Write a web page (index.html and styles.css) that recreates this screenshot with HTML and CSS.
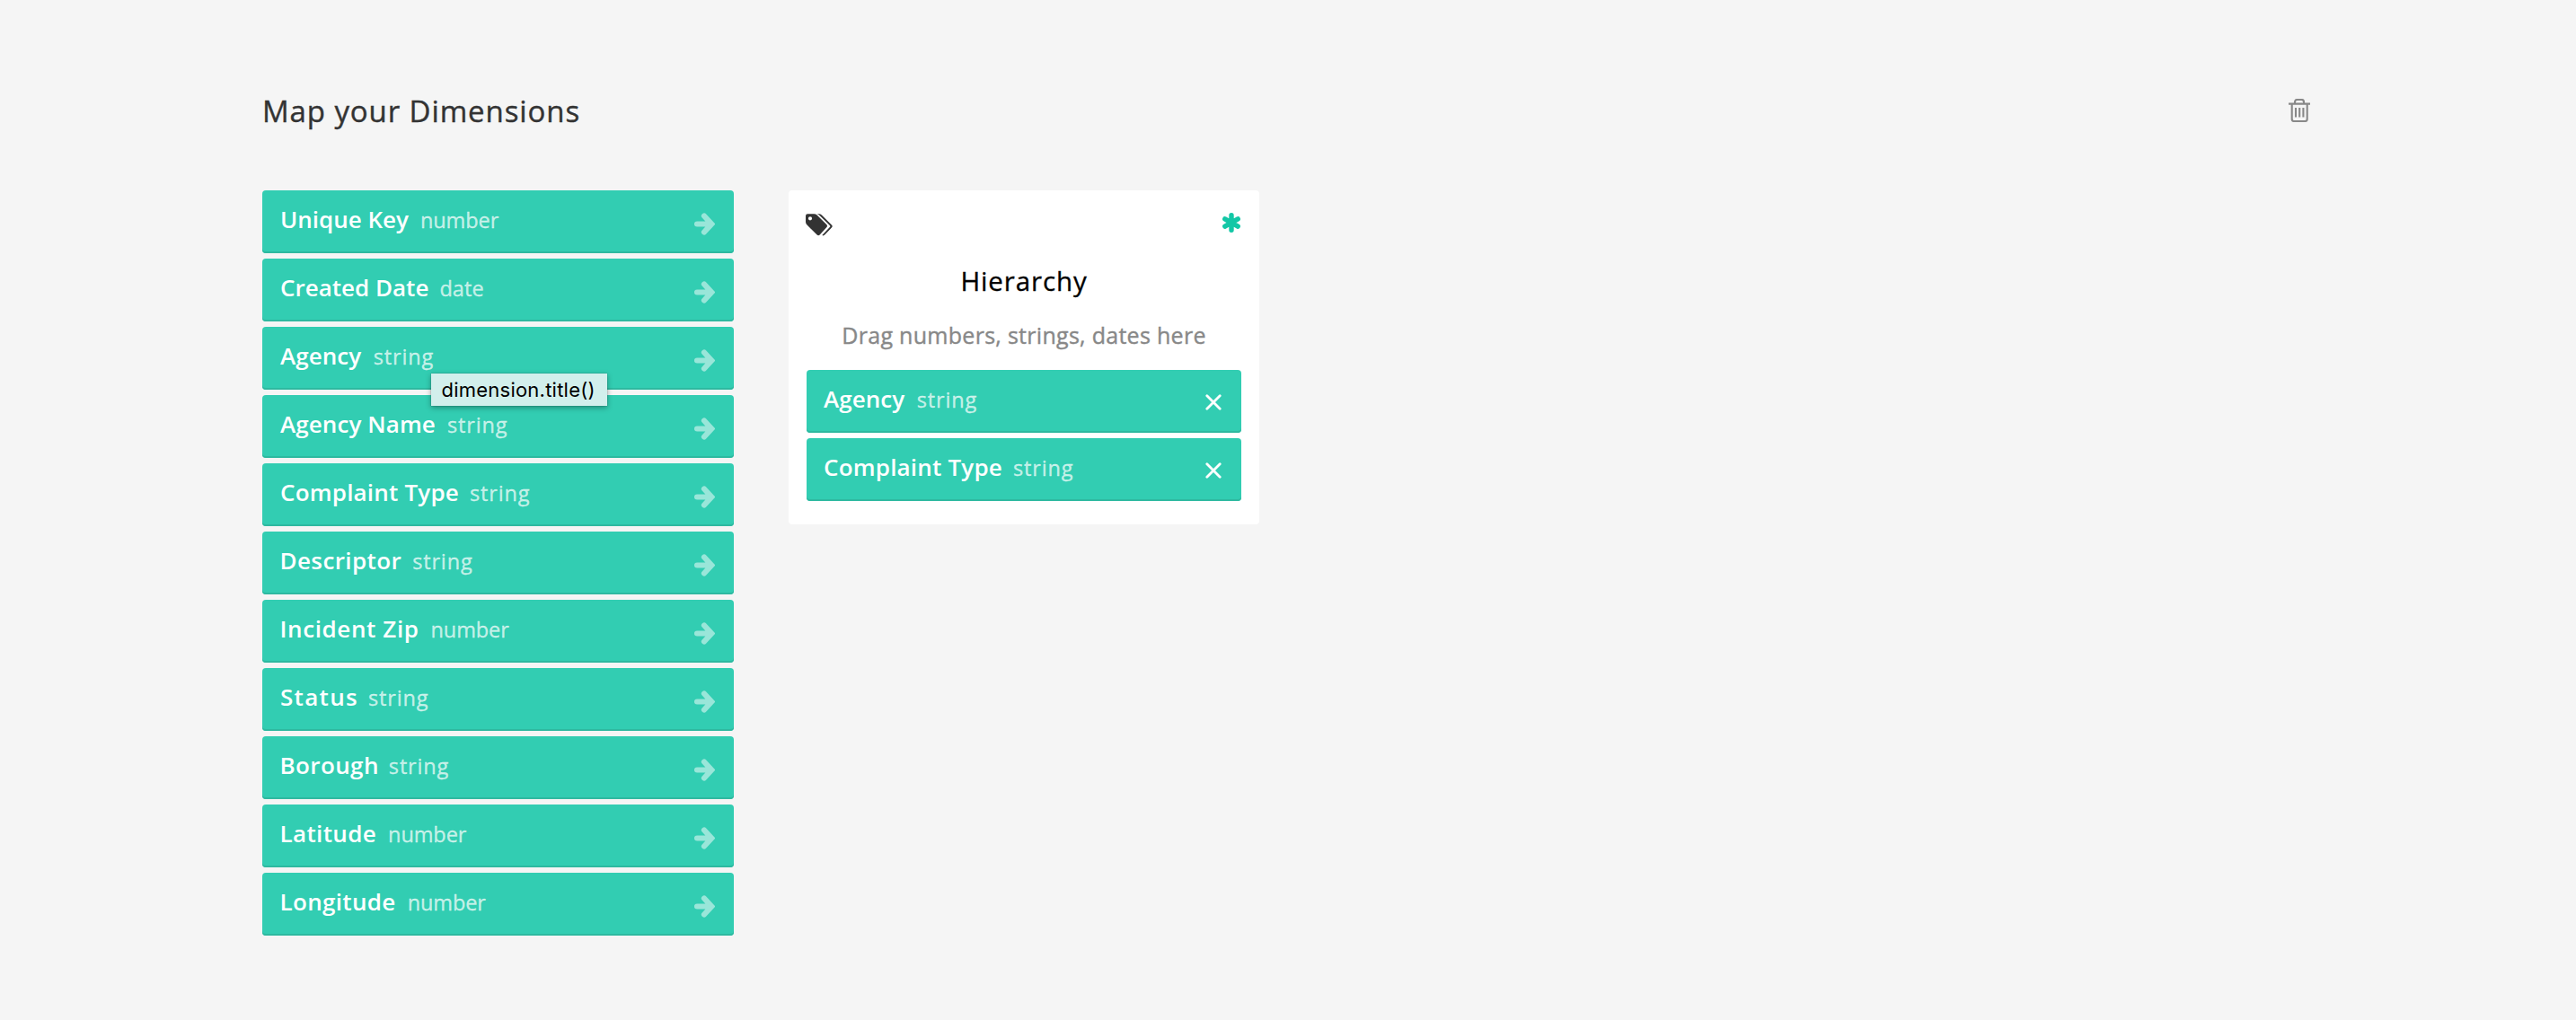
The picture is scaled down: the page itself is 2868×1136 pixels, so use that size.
FILE: index.html
```
<!DOCTYPE html>
<html lang="en">
<head>
<meta charset="utf-8">
<title>Map your Dimensions</title>
<link rel="stylesheet" href="styles.css">
</head>
<body>
<svg class="defs" aria-hidden="true">
  <symbol id="arrow" viewBox="0 0 23 25"><path d="M3 12.5H18M11 3.5L19.2 12.5L11 21.5" fill="none" stroke="currentColor" stroke-width="6.2" stroke-linecap="round" stroke-linejoin="miter"/></symbol>
  <symbol id="cross" viewBox="0 0 18 18"><path d="M1.8 1.8L16.2 16.2M16.2 1.8L1.8 16.2" fill="none" stroke="currentColor" stroke-width="2.8" stroke-linecap="round"/></symbol>
</svg>
<main class="page">
  <header class="header">
    <h1 class="title">Map your Dimensions</h1>
    <svg class="trash" viewBox="0 0 24 26"><path d="M0 5.6H24M7 5V3.6Q7 1 9.6 1H14.4Q17 1 17 3.6V5M3.7 6V22.4Q3.7 25 6.3 25H18.1Q20.7 25 20.7 22.4V6M8 10V20.6M12.2 10V20.6M16.4 10V20.6" fill="none" stroke="currentColor" stroke-width="2.1"/></svg>
  </header>
  <div class="columns">
    <ul class="list source">
      <li class="item"><span class="name unique-key">Unique Key</span><span class="type number">number</span><svg class="arrow"><use href="#arrow"/></svg></li>
      <li class="item"><span class="name created-date">Created Date</span><span class="type date">date</span><svg class="arrow"><use href="#arrow"/></svg></li>
      <li class="item"><span class="name agency">Agency</span><span class="type string">string</span><svg class="arrow"><use href="#arrow"/></svg><span class="tooltip">dimension.title()</span></li>
      <li class="item"><span class="name agency-name">Agency Name</span><span class="type string">string</span><svg class="arrow"><use href="#arrow"/></svg></li>
      <li class="item"><span class="name complaint-type">Complaint Type</span><span class="type string">string</span><svg class="arrow"><use href="#arrow"/></svg></li>
      <li class="item"><span class="name descriptor">Descriptor</span><span class="type string">string</span><svg class="arrow"><use href="#arrow"/></svg></li>
      <li class="item"><span class="name incident-zip">Incident Zip</span><span class="type number">number</span><svg class="arrow"><use href="#arrow"/></svg></li>
      <li class="item"><span class="name status">Status</span><span class="type string">string</span><svg class="arrow"><use href="#arrow"/></svg></li>
      <li class="item"><span class="name borough">Borough</span><span class="type string">string</span><svg class="arrow"><use href="#arrow"/></svg></li>
      <li class="item"><span class="name latitude">Latitude</span><span class="type number">number</span><svg class="arrow"><use href="#arrow"/></svg></li>
      <li class="item"><span class="name longitude">Longitude</span><span class="type number">number</span><svg class="arrow"><use href="#arrow"/></svg></li>
    </ul>
    <section class="card">
      <div class="card-head">
        <svg class="tags" viewBox="0 0 30 25"><path fill="currentColor" fill-rule="evenodd" d="M0 2.4Q0 .3 2.1 .3H9.3Q11.2 .3 12.6 1.6L23.2 12.1Q24.8 13.7 23.2 15.3L15.7 23.6Q14.2 25 12.6 23.6L2 13Q0 11.2 0 9.2ZM5 3.2A2.1 2.1 0 1 0 5 7.4A2.1 2.1 0 1 0 5 3.2Z"/><path fill="currentColor" d="M12.5 .3H14.6Q16.5 .3 17.9 1.6L28.9 12.4Q30.5 14 28.9 15.6L21.2 23.6Q19.8 25 18.3 24L27 14.8Q27.8 14 27 13.2L15.8 2.2Q14.5 .9 12.5 .3Z"/></svg>
        <svg class="asterisk" viewBox="0 0 20 22"><path d="M10 2.7V19.3M2.8 6.8L17.2 15.2M17.2 6.8L2.8 15.2" fill="none" stroke="currentColor" stroke-width="5.4" stroke-linecap="round"/></svg>
      </div>
      <h2 class="card-title">Hierarchy</h2>
      <p class="hint">Drag numbers, strings, dates here</p>
      <ul class="list">
        <li class="item"><span class="name agency">Agency</span><span class="type string">string</span><svg class="cross"><use href="#cross"/></svg></li>
        <li class="item"><span class="name complaint-type">Complaint Type</span><span class="type string">string</span><svg class="cross"><use href="#cross"/></svg></li>
      </ul>
    </section>
  </div>
</main>
</body>
</html>
```
FILE: styles.css
```
* { box-sizing: border-box; }
body { margin: 0; background: #f5f5f5; font-family: "Open Sans", "Noto Sans", sans-serif; color: #333; }
.defs { position: absolute; width: 0; height: 0; }
.page { padding: 100px 296px 94px 292px; }
.header { display: flex; justify-content: space-between; align-items: flex-start; height: 50px; margin-bottom: 62px; }
.title { margin: 0; font-size: 33px; font-weight: 400; line-height: 48px; letter-spacing: .9px; -webkit-text-stroke: .4px; }
.trash { width: 24px; height: 26px; margin-top: 10px; color: #888; }
.columns { display: flex; align-items: flex-start; gap: 61px; }

.list { display: flex; flex-direction: column; gap: 6px; margin: 0; padding: 0; list-style: none; }
.source { width: 525px; }
.item { position: relative; display: flex; height: 70px; padding: 0 21px 0 20px; border-radius: 4px; background: #32cdb2; box-shadow: inset 0 -2px 0 #2eb9a0; color: #fff; line-height: 64px; }
.name { margin-right: 12px; font-size: 26px; font-weight: 600; }
.type { font-size: 23.5px; line-height: 66px; color: rgba(255, 255, 255, .7); -webkit-text-stroke: .3px; }
.arrow { width: 23px; height: 25px; margin: 24.5px 0 0 auto; color: rgba(255, 255, 255, .5); }
.cross { width: 18px; height: 18px; margin: 26.6px 1px 0 auto; }

.number { margin-left: 1px; letter-spacing: -.1px; }
.string { letter-spacing: .85px; }
.date { letter-spacing: .1px; }
.descriptor, .incident-zip, .borough, .latitude, .longitude { margin-left: -.5px; }
.agency { margin-right: 13.5px; letter-spacing: .05px; }
.agency-name { margin-right: 13px; letter-spacing: .09px; }
.complaint-type { letter-spacing: .2px; }
.descriptor { letter-spacing: .4px; }
.incident-zip { letter-spacing: .61px; }
.status { margin-right: 11px; letter-spacing: 1.3px; }
.borough { margin-right: 11px; letter-spacing: .4px; }
.latitude { letter-spacing: .36px; }
.longitude { letter-spacing: .33px; }

.tooltip { position: absolute; z-index: 1; left: 188px; top: 52px; width: 196px; height: 36px; padding-left: 11.5px; background: #d2efec; box-shadow: 0 2px 6px rgba(0, 0, 0, .35), 0 0 1px rgba(0, 0, 0, .4); color: #000; font: 400 22px/36px Inter, sans-serif; letter-spacing: .23px; }

.card { width: 524px; height: 372px; padding: 0 20px; border-radius: 4px; background: #fff; }
.card .item { padding-left: 19px; }
.card-head { display: flex; justify-content: space-between; height: 81px; padding-top: 25px; margin: 0 1px 0 -1px; }
.tags { width: 30px; height: 25px; margin-top: 1px; }
.asterisk { width: 20px; height: 22px; color: #13c7a6; }
.card-title { margin: 0 0 20px; font-size: 29.5px; font-weight: 400; line-height: 40px; letter-spacing: .88px; color: #000; text-align: center; -webkit-text-stroke: .3px; }
.hint { margin: 0 0 19px; font-size: 25px; line-height: 40px; letter-spacing: .29px; color: #888; text-align: center; white-space: nowrap; -webkit-text-stroke: .4px; }
```
